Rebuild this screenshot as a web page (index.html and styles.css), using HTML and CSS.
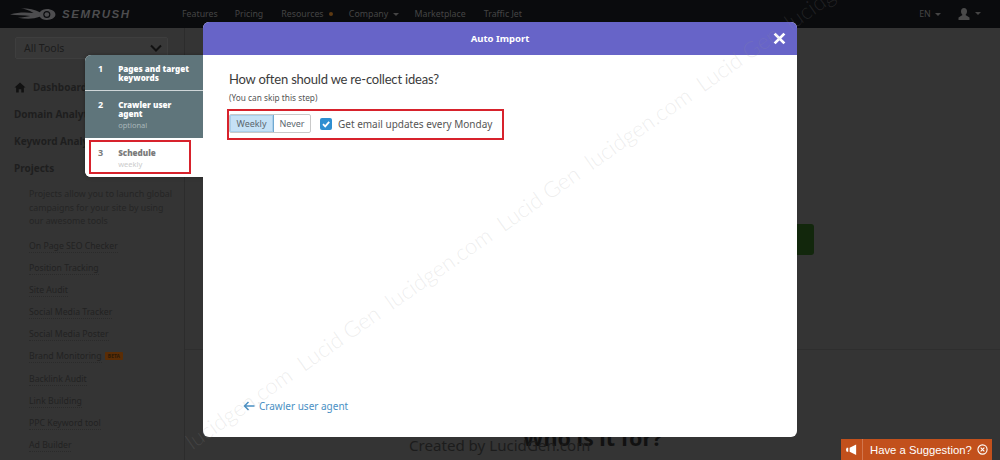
FILE: index.html
```html
<!DOCTYPE html>
<html lang="en">
<head>
<meta charset="utf-8">
<title>Auto Import</title>
<link rel="stylesheet" href="styles.css">
</head>
<body>
<header class="topbar">
  <div class="logo">
    <svg class="logo-mark" viewBox="0 0 60 16" width="47" height="13"><path d="M0 8C10 5 20 5 30 6 24 2 18 1 14 0 24 0 32 2 38 5 40 2 44 1 47 1 53 1 58 4 58 8S53 15 47 15C43 15 40 14 38 11 30 14 20 14 10 12 16 12 22 11 26 10 18 9 8 9 0 8Z" fill="#4d4d4f"/><circle cx="47" cy="8" r="4.5" fill="#0a0b0d"/><circle cx="47" cy="8" r="3" fill="#4d4d4f"/></svg>
    <span class="logo-text">SEMRUSH</span>
  </div>
  <nav class="nav">
    <span class="nav-features">Features</span>
    <span class="nav-wide">Pricing</span>
    <span>Resources <i class="dot"></i></span>
    <span>Company <i class="caret"></i></span>
    <span class="nav-wide">Marketplace</span>
    <span>Traffic Jet</span>
  </nav>
  <div class="top-right">
    <span class="lang">EN <i class="caret"></i></span>
    <span class="user"><svg viewBox="0 0 12 12" width="12" height="12"><path d="M6 0C8 0 9 1.500 9 3.500 9 5 8.200 6.300 7.500 7L11.500 9.500V12H.5V9.500L4.500 7C3.800 6.300 3 5 3 3.500 3 1.500 4 0 6 0Z" fill="#4a4a4a"/></svg> <i class="caret"></i></span>
  </div>
</header>

<div class="page">
  <aside class="sidebar">
    <div class="tool-select"><span>All Tools</span><svg viewBox="0 0 12 8" width="12" height="8"><path d="M1 1.500 6 6.500 11 1.500" fill="none" stroke="#111" stroke-width="2"/></svg></div>
    <div class="side-head side-dash"><svg viewBox="0 0 12 12" width="12" height="11"><path d="M6 .5 12 6H10.200V11.500H7.400V8H4.600V11.500H1.800V6H0Z" fill="#111"/></svg>Dashboard</div>
    <div class="side-head">Domain Analytics</div>
    <div class="side-head">Keyword Analytics</div>
    <div class="side-head">Projects</div>
    <p class="side-text">Projects allow you to launch global campaigns for your site by using our awesome tools</p>
    <ul class="side-links">
      <li><span>On Page SEO Checker</span></li>
      <li><span>Position Tracking</span></li>
      <li><span>Site Audit</span></li>
      <li><span>Social Media Tracker</span></li>
      <li><span>Social Media Poster</span></li>
      <li><span>Brand Monitoring</span> <b class="badge">BETA</b></li>
      <li><span>Backlink Audit</span></li>
      <li><span>Link Building</span></li>
      <li><span>PPC Keyword tool</span></li>
      <li><span>Ad Builder</span></li>
    </ul>
  </aside>
  <main class="main">
    <div class="green-btn"></div>
    <div class="rule"></div>
    <div class="bottom-copy">
      <h2>Who is it for?</h2>
    </div>
  </main>
</div>

<div class="created">Created by LucidGen.com</div>

<ol class="steps">
  <li class="step step-first"><span class="num">1</span><div><strong>Pages and target keywords</strong></div></li>
  <li class="step step-second"><span class="num">2</span><div><strong>Crawler user agent</strong><small>optional</small></div></li>
  <li class="step step-active"><span class="num">3</span><div><strong>Schedule</strong><small>weekly</small></div></li>
</ol>
<div class="step-outline"></div>

<section class="modal">
  <div class="modal-head">
    <span>Auto Import</span>
    <svg class="close" viewBox="0 0 12 12" width="13" height="13"><path d="M1.500 1.500 10.500 10.500M10.500 1.500 1.500 10.500" stroke="#fff" stroke-width="2.600" fill="none"/></svg>
  </div>
  <div class="modal-body">
    <h1>How often should we re-collect ideas?</h1>
    <p class="skip">(You can skip this step)</p>
    <div class="options">
      <div class="toggle"><span class="on">Weekly</span><span>Never</span></div>
      <label class="check"><i class="box"><svg viewBox="0 0 12 12" width="12" height="12"><path d="M3 6.200 5.200 8.400 9.200 3.800" fill="none" stroke="#fff" stroke-width="1.800"/></svg></i>Get email updates every Monday</label>
    </div>
    <div class="back"><svg viewBox="0 0 12 10" width="12" height="10"><path d="M11.500 5H1.500M5.500 1 1.500 5 5.500 9" fill="none" stroke="#4a90c4" stroke-width="1.500"/></svg>Crawler user agent</div>
  </div>
</section>

<div class="watermark"><span>lucidgen.com</span><span>Lucid Gen</span><span>lucidgen.com</span><span>Lucid Gen</span><span>lucidgen.com</span><span>Lucid Gen</span><span>lucidgen.com</span></div>

<aside class="suggest">
  <span class="suggest-icon"><svg viewBox="0 0 14 12" width="13" height="12"><path d="M5 3.500 12 0V11.500L5 8ZM3.500 3.500V8L1.800 8 1 5.700 1.800 3.500Z" fill="#fff"/></svg></span>
  <span class="suggest-text">Have a Suggestion?</span>
  <svg class="suggest-x" viewBox="0 0 12 12" width="11" height="11"><circle cx="6" cy="6" r="5" fill="none" stroke="#fff" stroke-width="1.200"/><path d="M4 4 8 8M8 4 4 8" stroke="#fff" stroke-width="1.200"/></svg>
</aside>
</body>
</html>
```
FILE: styles.css
```css
*, *::before, *::after { box-sizing: border-box; }
html, body { margin: 0; height: 460px; overflow: hidden; }
body { background: #343434; font-family: "Noto Sans", "Open Sans", sans-serif; color: #222; position: relative; }

.topbar { height: 28px; background: #0a0b0d; display: flex; align-items: center; padding-left: 10px; color: #454545; font-size: 8.800px; }
.logo { display: flex; align-items: center; gap: 5px; width: 172px; }
.logo-text { font-family: "Liberation Sans", sans-serif; font-style: italic; font-weight: 700; font-size: 11.500px; letter-spacing: 1.600px; color: #4d4d4f; }
.nav { display: flex; gap: 16px; }
.nav-features { margin-right: 1px; }
.nav-wide { margin-right: 2px; }
.dot { display: inline-block; width: 4px; height: 4px; border-radius: 50%; background: #5e3a12; margin: 0 0 1px 3px; }
.caret { display: inline-block; width: 0; height: 0; border: 3px solid transparent; border-top-color: #454545; border-bottom: 0; margin: 0 0 1px 2px; }
.top-right { margin-left: auto; display: flex; align-items: center; gap: 17px; padding-right: 19px; }
.user { display: flex; align-items: center; gap: 3px; }

.page { display: flex; height: 432px; }
.sidebar { width: 185px; border-right: 1px solid #2c2c2c; padding: 9px 0 0 15px; flex: none; }
.tool-select { width: 153px; height: 22px; background: #383838; border: 1px solid #3e3e3e; display: flex; align-items: center; justify-content: space-between; padding: 0 5px 0 8px; font-size: 10.500px; color: #1c1c1c; border-radius: 2px; }
.side-head { font-size: 10px; font-weight: 700; color: #1e1e1e; height: 27px; line-height: 27px; margin-left: -1px; white-space: nowrap; }
.side-dash { margin-top: 15px; display: flex; align-items: center; gap: 7px; }
.side-text { margin: 6px 0 0 14px; width: 145px; font-size: 8.800px; line-height: 13.500px; color: #252525; }
.side-links { list-style: none; margin: 6px 0 0 14px; padding: 0; font-size: 8.700px; color: #222; }
.side-links li { height: 22.200px; line-height: 22px; white-space: nowrap; }
.side-links span { border-bottom: 1px dotted #2a2a2a; }
.badge { background: #5a2d06; color: #2b1a08; font-size: 5px; padding: 1px 3px; border-radius: 1px; vertical-align: 1px; margin-left: 1px; }

.main { flex: 1; position: relative; overflow: hidden; }
.green-btn { position: absolute; left: 590px; top: 196px; width: 39px; height: 31px; background: #12270c; border-radius: 3px; }
.rule { position: absolute; left: 0; right: 0; top: 321px; border-top: 1px solid #2e2e2e; }
.bottom-copy { position: absolute; left: 0; right: 0; top: 395px; text-align: center; }
.bottom-copy h2 { margin: 0; font-size: 21.500px; font-weight: 700; color: #111; }
.created { position: absolute; left: 409px; top: 435px; font-size: 15.100px; color: #1c1c1c; }

.steps { position: absolute; left: 85px; top: 55px; width: 124px; margin: 0; padding: 0; list-style: none; background: #fff; border-radius: 6px 0 0 6px; overflow: hidden; font-size: 8.100px; line-height: 9px; box-shadow: 0 0 4px rgba(0,0,0,.3); }
.step { display: flex; gap: 15px; padding: 9px 0 0 13px; background: #5f757b; color: #fff; font-weight: 700; }
.step-first { height: 36px; border-bottom: 1px solid #cfd6d8; }
.step-second { height: 47px; }
.step-active { height: 39px; background: #fff; color: #7b7b7b; padding-top: 10px; }
.step .num { font-size: 9px; }
.step div { width: 75px; }
.step strong { display: block; }
.step small { display: block; font-size: 7.500px; font-weight: 400; color: #a9b7ba; margin-top: 3px; }
.step-active small { color: #ccc; }
.step-outline { position: absolute; left: 89px; top: 140px; width: 102px; height: 34px; border: 2px solid #d7222c; }

.modal { position: absolute; left: 203px; top: 22px; width: 594px; height: 415px; background: #fff; border-radius: 6px; overflow: hidden; }
.modal-head { height: 33px; background: #6764c8; color: #fff; font-size: 9.500px; font-weight: 700; display: flex; align-items: center; justify-content: center; position: relative; }
.close { position: absolute; right: 11px; top: 10px; }
.modal-body { padding: 14px 0 0 26px; position: relative; height: 382px; }
h1 { margin: 0; font-family: "Lato", sans-serif; font-size: 13px; font-weight: 400; letter-spacing: -.2px; line-height: 20px; color: #3b3b3b; }
.skip { margin: 3px 0 0; font-size: 8.300px; line-height: 12px; color: #555; }
.options { display: flex; align-items: center; gap: 9px; margin-top: 10px; height: 19px; }
.toggle { display: flex; height: 19px; border: 1px solid #c9c9c9; border-radius: 2px; font-size: 9px; line-height: 17px; color: #5c6870; width: 82px; }
.toggle span { flex: 1; text-align: center; }
.toggle .on { background: #c5e1f6; border-right: 1px solid #6fa9d2; flex: 0 0 44px; box-shadow: inset 0 0 0 1px #a9cfeb; }
.check { display: flex; align-items: center; gap: 6px; font-size: 10px; color: #555; white-space: nowrap; }
.box { width: 12px; height: 12px; border-radius: 2px; background: #2f8fd1; display: block; }
.box svg { display: block; }
.back { position: absolute; left: 40px; top: 344px; display: flex; align-items: center; gap: 4px; font-size: 10px; line-height: 14px; color: #4a90c4; white-space: nowrap; }
.options::after { content: ""; position: absolute; left: 24px; top: 54px; width: 277px; height: 31px; border: 2px solid #d7222c; }

.watermark { position: absolute; left: 181px; top: 434px; display: flex; gap: 12px; transform-origin: left top; transform: rotate(-35deg); font-family: "Lato", sans-serif; font-weight: 300; font-size: 22px; line-height: 24px; color: rgba(150,150,150,.17); white-space: nowrap; pointer-events: none; }

.suggest { position: absolute; left: 841px; top: 439px; width: 151px; height: 21px; background: #c2501c; color: #fff; display: flex; align-items: center; font-family: "Liberation Sans", sans-serif; font-size: 11.300px; white-space: nowrap; }
.suggest-icon { width: 22px; height: 21px; border-right: 1px solid #d2764e; display: flex; align-items: center; justify-content: center; flex: none; }
.suggest-text { margin-left: 7px; }
.suggest-x { margin-left: 5px; }
```
